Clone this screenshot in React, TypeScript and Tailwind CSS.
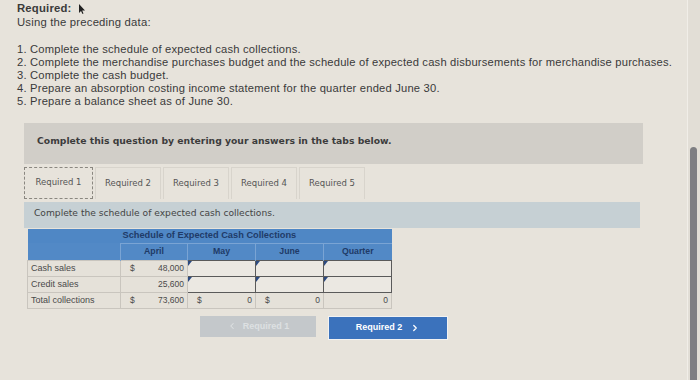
import { ChevronLeft, ChevronRight } from 'lucide-react';

const items = [
  '1. Complete the schedule of expected cash collections.',
  '2. Complete the merchandise purchases budget and the schedule of expected cash disbursements for merchandise purchases.',
  '3. Complete the cash budget.',
  '4. Prepare an absorption costing income statement for the quarter ended June 30.',
  '5. Prepare a balance sheet as of June 30.',
];

const tabs = ['Required 1', 'Required 2', 'Required 3', 'Required 4', 'Required 5'];

function Marker() {
  return <span className="absolute left-0 top-0 w-0 h-0 border-t-[5px] border-t-[#2c4a80] border-r-[4px] border-r-transparent" />;
}

function InputCell() {
  return (
    <td className="p-0 border-[1.5px] border-[#5a5a5a] bg-[#ebe8e2] relative h-[16px]">
      <Marker />
    </td>
  );
}

function MoneyCell({ value, sign }: { value: string; sign?: boolean }) {
  return (
    <td className="p-0 border border-[#c9c5be] h-[16px]">
      <div className="flex justify-between px-[3px] text-[8.5px] text-[#4a4a4a]">
        <span className="pl-[6px]">{sign ? '$' : ''}</span>
        <span>{value}</span>
      </div>
    </td>
  );
}

export default function App() {
  return (
    <div className="w-[700px] h-[380px] bg-[#e7e3db] flex overflow-hidden">
      <div className="flex-1 pl-[17px]">
        <div className="pt-[2px] font-['Liberation_Sans',sans-serif] text-[#3a3a3a] tracking-[0.2px]">
          <div className="flex items-center gap-[6px] text-[11.3px] leading-[13px] font-bold">
            Required:
            <svg width="8" height="10" viewBox="0 0 8 10">
              <path d="M1 0 L1 9 L3 7 L4.5 10 L5.5 9.5 L4.2 6.6 L7 6.6 Z" fill="#222" />
            </svg>
          </div>
          <div className="text-[11.3px] leading-[13px] mt-[1px]">Using the preceding data:</div>
          <div className="mt-[14px] text-[11.2px] leading-[13px]">
            {items.map((t) => (
              <div key={t}>{t}</div>
            ))}
          </div>
        </div>

        <div className="ml-[7px] mt-[15px] w-[619px] h-[41px] bg-[#d1cec8] flex items-center pl-[13px] pb-[6px] font-['DejaVu_Sans',sans-serif] text-[9.25px] font-bold text-[#3c3c3c]">
          Complete this question by entering your answers in the tabs below.
        </div>

        <div className="ml-[7px] mt-[3px] flex gap-[2px] h-[32px] font-['DejaVu_Sans',sans-serif] text-[8.5px] text-[#555]">
          {tabs.map((t, i) => (
            <div
              key={t}
              className={
                i === 0
                  ? 'w-[69px] border border-dashed border-[#8a8780] flex items-center justify-center pb-[2px]'
                  : 'w-[66px] border border-[#d8d4cc] border-b-0 flex items-center justify-center'
              }
            >
              {t}
            </div>
          ))}
        </div>

        <div className="ml-[7px] mt-[3px] w-[616px] h-[26px] bg-[#c6d0d4] flex items-center pl-[10px] pb-[3px] font-['DejaVu_Sans',sans-serif] text-[9.15px] text-[#444]">
          Complete the schedule of expected cash collections.
        </div>

        <table className="ml-[10px] mt-[1px] border-collapse font-['Liberation_Sans',sans-serif] table-fixed w-[364px]">
          <colgroup>
            <col className="w-[93px]" />
            <col className="w-[67px]" />
            <col className="w-[68px]" />
            <col className="w-[68px]" />
            <col className="w-[68px]" />
          </colgroup>
          <thead>
            <tr className="bg-[#4f87c5] h-[14px]">
              <th className="p-0" />
              <th colSpan={4} className="p-0 pl-[2px] text-[9.25px] font-bold text-[#1f3b68] text-left">
                Schedule of Expected Cash Collections
              </th>
            </tr>
            <tr className="bg-[#5289c6] h-[17px] text-[8.75px] font-bold text-[#1f3b68]">
              <th className="p-0 border-r border-[#7aa4d4]" />
              <th className="p-0 border-r border-t border-[#7aa4d4]">April</th>
              <th className="p-0 border-r border-t border-[#7aa4d4]">May</th>
              <th className="p-0 border-r border-t border-[#7aa4d4]">June</th>
              <th className="p-0 border-t border-[#7aa4d4]">Quarter</th>
            </tr>
          </thead>
          <tbody className="bg-[#e5e1d9]">
            <tr>
              <td className="p-0 pl-[3px] border border-[#c9c5be] text-[9px] text-[#4a4a4a] h-[16px]">Cash sales</td>
              <MoneyCell value="48,000" sign />
              <InputCell />
              <InputCell />
              <InputCell />
            </tr>
            <tr>
              <td className="p-0 pl-[3px] border border-[#c9c5be] text-[9px] text-[#4a4a4a] h-[16px]">Credit sales</td>
              <MoneyCell value="25,600" />
              <InputCell />
              <InputCell />
              <InputCell />
            </tr>
            <tr>
              <td className="p-0 pl-[3px] border border-[#c9c5be] text-[9px] text-[#4a4a4a] h-[16px]">Total collections</td>
              <MoneyCell value="73,600" sign />
              <MoneyCell value="0" sign />
              <MoneyCell value="0" sign />
              <MoneyCell value="0" />
            </tr>
          </tbody>
        </table>

        <div className="flex gap-[13px] ml-[183px] mt-[7px] font-['Liberation_Sans',sans-serif] text-[9px] font-bold">
          <div className="w-[116px] h-[21px] bg-[#c4c8cb] text-[#dde0e2] flex items-center justify-center gap-[6px]">
            <ChevronLeft size={10} strokeWidth={2.5} />
            Required 1
          </div>
          <div className="w-[118px] h-[22px] mt-[1px] bg-[#3b72bc] text-white flex items-center justify-center gap-[8px] shadow-[0_0_0_1px_#f2f2f2]">
            Required 2
            <ChevronRight size={10} strokeWidth={3} />
          </div>
        </div>
      </div>

      <div className="w-[13px] flex border-l border-[#f1eee8] bg-[#e2ded6]">
        <div className="ml-[2px] mt-[147px] w-[7px] h-[240px] rounded-full bg-[#7e7e82]" />
      </div>
    </div>
  );
}
